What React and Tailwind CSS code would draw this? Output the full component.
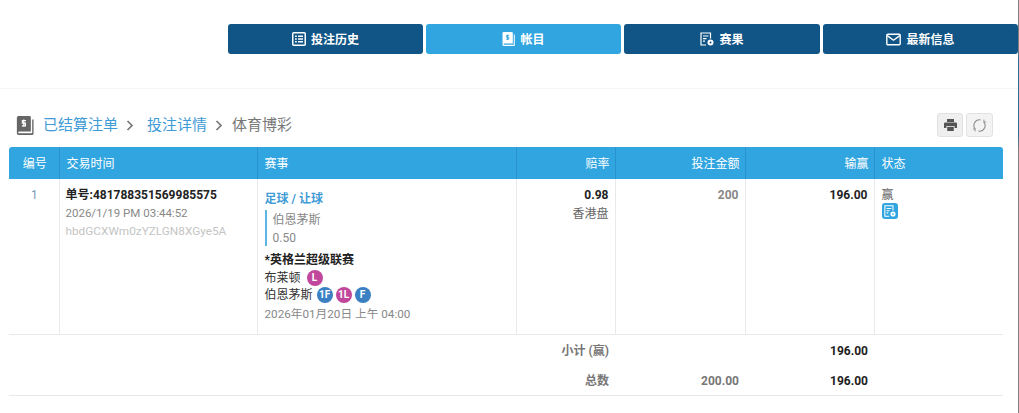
const ListIcon = () => (
  <svg width="14" height="14" viewBox="0 0 14 14" fill="none" stroke="currentColor" strokeWidth="1.5">
    <rect x="0.75" y="0.75" width="12.5" height="12.5" rx="1" />
    <path d="M3 4.2h1.8M3 7h1.8M3 9.8h1.8M6 4.2h5M6 7h5M6 9.8h5" strokeWidth="1.6" />
  </svg>
);

const LedgerIcon = ({ className = '', width = 13, height = 14, mark = '#31a5df' }) => (
  <svg width={width} height={height} viewBox="0 0 13 14" className={className}>
    <path d="M0.5 1.2A1.2 1.2 0 0 1 1.7 0h8.1a1 1 0 0 1 1 1v10.4H2.2a.7.7 0 0 0 0 1.4h9.6V2.5h1V13a1 1 0 0 1-1 1H1.7a1.2 1.2 0 0 1-1.2-1.2z" fill="currentColor" />
    <path d="M7.2 3.4H4.6v1.9h2.2v1.9H4.2M5.6 2.6v5.4" fill="none" stroke={mark} strokeWidth="0.9" />
  </svg>
);

const ResultIcon = ({ size = 14, hole = '#105585' }) => (
  <svg width={size} height={size} viewBox="0 0 14 14" fill="none" stroke="currentColor" strokeWidth="1.2">
    <path d="M6 13H1V1h9.5v5.5" />
    <path d="M3 4h5.5M3 6.6h3.5M3 9.2h2" />
    <circle cx="10.5" cy="10.5" r="3" fill="currentColor" stroke="none" />
    <circle cx="10.5" cy="10.5" r="1" fill={hole} stroke="none" />
  </svg>
);

const MailIcon = () => (
  <svg width="15" height="13" viewBox="0 0 15 13" fill="none" stroke="currentColor" strokeWidth="1.4">
    <rect x="0.8" y="1.2" width="13.4" height="10.6" rx="1" />
    <path d="M1.2 2.6l6.3 4.6 6.3-4.6" />
  </svg>
);

const PrintIcon = () => (
  <svg width="13" height="12" viewBox="0 0 13 12">
    <path d="M3 0h7v3H3z" fill="#555" />
    <path d="M1.2 3.6h10.6A1.2 1.2 0 0 1 13 4.8V9h-2.4V7H2.4v2H0V4.8a1.2 1.2 0 0 1 1.2-1.2z" fill="#555" />
    <path d="M3.2 7.8h6.6V12H3.2z" fill="#555" />
  </svg>
);

const ReloadIcon = () => (
  <svg width="15" height="15" viewBox="0 0 15 15" fill="none" stroke="#8f8f8f" strokeWidth="1.1">
    <path d="M8.5 1.9A5.6 5.6 0 0 0 3.4 11.2" />
    <path d="M6.5 13.1A5.6 5.6 0 0 0 11.6 3.8" />
    <path d="M11.9 1.6v2.4h2.2M3.1 13.4V11H.9" strokeWidth="0.9" />
  </svg>
);

const Chevron = () => (
  <svg width="8" height="11" viewBox="0 0 8 11" fill="none" stroke="#777" strokeWidth="1.7">
    <path d="M1.5 1l4.5 4.5L1.5 10" />
  </svg>
);

const tabs = [
  { label: '投注历史', icon: <ListIcon />, width: 'w-[195px]' },
  { label: '帐目', icon: <LedgerIcon />, width: 'w-[195px]', active: true },
  { label: '赛果', icon: <ResultIcon />, width: 'w-[196px]' },
  { label: '最新信息', icon: <MailIcon />, width: 'w-[195px]' },
];

const Badge = ({ text, pink }) => (
  <span
    className={`inline-flex h-4 w-4 items-center justify-center rounded-full text-[10px] font-bold leading-none text-white ${
      pink ? 'bg-[#c0479b]' : 'bg-[#3a80c3]'
    }`}
  >
    {text}
  </span>
);

const th = 'border-l border-[#2a93cc] pl-[7px] pr-[5px] pt-[2px] font-normal first:border-l-0';
const td = 'border-l border-[#e9e9e9] pl-[7px] pr-[6px] align-top first:border-l-0';

export default function App() {
  return (
    <div
      className="flex h-[413px] w-[1019px] overflow-hidden bg-white text-[12px] text-[#666]"
      style={{ fontFamily: 'Roboto, "Noto Sans CJK SC", sans-serif' }}
    >
      <div className="w-[1018px] shrink-0">
        <div className="flex gap-[3px] pl-[228px] pt-6">
          {tabs.map((tab) => (
            <div
              key={tab.label}
              className={`flex h-[30px] items-center justify-center gap-[5px] rounded-[3px] text-[12px] font-bold text-white ${tab.width} ${
                tab.active ? 'bg-[#31a5df]' : 'bg-[#105585]'
              }`}
            >
              {tab.icon}
              <span className="pt-px">{tab.label}</span>
            </div>
          ))}
        </div>

        <div className="mt-[34px] border-t border-[#f4f4f4] pl-[9px] pr-[15px] pt-[24px]">
          <div className="flex h-[34px] items-start justify-between">
            <div className="flex h-[24px] items-center pl-[7px] text-[15px]">
              <LedgerIcon className="mr-[9px]" width={18} height={19} mark="#fff" />
              <span className="text-[#3f9bd6]">已结算注单</span>
              <span className="ml-[8px] mr-[13px]"><Chevron /></span>
              <span className="text-[#3f9bd6]">投注详情</span>
              <span className="ml-[8px] mr-[9px]"><Chevron /></span>
              <span className="text-[#777]">体育博彩</span>
            </div>
            <div className="flex gap-[3px] pr-[10px]">
              <button className="flex h-[24px] w-[26px] items-center justify-center rounded-[3px] border border-[#e2e2e2] bg-[#efefef]">
                <PrintIcon />
              </button>
              <button className="flex h-[24px] w-[27px] items-center justify-center rounded-[3px] border border-[#e2e2e2] bg-[#f3f3f3]">
                <ReloadIcon />
              </button>
            </div>
          </div>

          <table className="w-[994px] table-fixed border-collapse">
            <colgroup>
              <col className="w-[50px]" />
              <col className="w-[198px]" />
              <col className="w-[259px]" />
              <col className="w-[99px]" />
              <col className="w-[130px]" />
              <col className="w-[129px]" />
              <col className="w-[129px]" />
            </colgroup>
            <thead>
              <tr className="h-[32px] bg-[#31a5df] text-white">
                <th className={`${th} rounded-tl-[3px] text-center`}>编号</th>
                <th className={`${th} text-left`}>交易时间</th>
                <th className={`${th} text-left`}>赛事</th>
                <th className={`${th} text-right`}>赔率</th>
                <th className={`${th} text-right`}>投注金额</th>
                <th className={`${th} text-right`}>输赢</th>
                <th className={`${th} rounded-tr-[3px] text-left`}>状态</th>
              </tr>
            </thead>
            <tbody>
              <tr className="h-[155px] border-b border-[#e9e9e9]">
                <td className={`${td} pt-[7px] text-center leading-[18px] text-[#7a9ab5]`}>1</td>
                <td className={`${td} !pl-[6px] pt-[7px] leading-[18px]`}>
                  <div className="font-bold text-[#222]">单号:481788351569985575</div>
                  <div className="text-[11.5px] text-[#888]">2026/1/19 PM 03:44:52</div>
                  <div className="text-[11.8px] text-[#c4c4c4]">hbdGCXWm0zYZLGN8XGye5A</div>
                </td>
                <td className={`${td} pt-[11px] leading-[18px]`}>
                  <div className="font-bold text-[#3f9bd6]">足球 / 让球</div>
                  <div className="mb-[5px] mt-[2px] h-[36px] border-l-2 border-[#5db5e6] pl-[6px] pt-px text-[#888]">
                    <div>伯恩茅斯</div>
                    <div className="mt-px leading-[16px]">0.50</div>
                  </div>
                  <div className="font-bold text-[#222]">*英格兰超级联赛</div>
                  <div className="flex items-center gap-[6px] text-[#333]">
                    布莱顿 <Badge text="L" pink />
                  </div>
                  <div className="-mt-px flex items-center gap-[3px] text-[#333]">
                    <span className="mr-[1px]">伯恩茅斯</span>
                    <Badge text="1F" />
                    <Badge text="1L" pink />
                    <Badge text="F" />
                  </div>
                  <div className="mt-px text-[11.7px] text-[#888]">2026年01月20日 上午 04:00</div>
                </td>
                <td className={`${td} pt-[7px] text-right leading-[19px]`}>
                  <div className="font-bold text-[#222]">0.98</div>
                  <div>香港盘</div>
                </td>
                <td className={`${td} pt-[7px] text-right font-bold leading-[18px] text-[#888]`}>200</td>
                <td className={`${td} pt-[7px] text-right font-bold leading-[18px] text-[#222]`}>196.00</td>
                <td className={`${td} pt-[8px] leading-[16px]`}>
                  <div>赢</div>
                  <div className="flex h-4 w-4 items-center justify-center rounded-[3px] bg-[#31a5df] text-white">
                    <ResultIcon size={12} hole="#31a5df" />
                  </div>
                </td>
              </tr>
              <tr className="h-[30px] font-bold">
                <td colSpan={3} />
                <td className="px-[6px] pt-[3px] text-right text-[#777]">小计 (赢)</td>
                <td />
                <td className="px-[6px] pt-[3px] text-right text-[#222]">196.00</td>
                <td />
              </tr>
              <tr className="h-[31px] border-b border-[#e9e9e9] font-bold">
                <td colSpan={3} />
                <td className="px-[6px] pt-[3px] text-right text-[#777]">总数</td>
                <td className="px-[6px] pt-[3px] text-right text-[#777]">200.00</td>
                <td className="px-[6px] pt-[3px] text-right text-[#222]">196.00</td>
                <td />
              </tr>
            </tbody>
          </table>
        </div>
      </div>
      <div className="w-px bg-[linear-gradient(#808080_0,#808080_50px,#2a6f9a_60px,#2a6f9a_135px,#808080_150px,#808080_100%)]" />
    </div>
  );
}
